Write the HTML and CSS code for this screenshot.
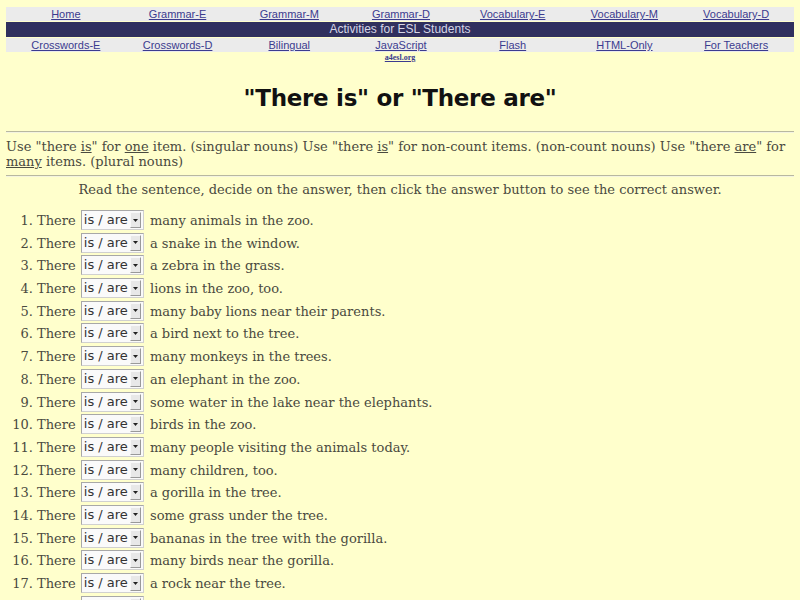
FILE: index.html
```html
<!DOCTYPE html>
<html lang="en">
<head>
  <meta charset="UTF-8">
  <title>There is or There are</title>
  <link rel="stylesheet" href="styles.css">
</head>
<body>

<div class="page">

  <!-- site navigation -->
  <div class="nav">
    <div class="nav-row">
      <a href="#">Home</a>
      <a href="#">Grammar-E</a>
      <a href="#">Grammar-M</a>
      <a href="#">Grammar-D</a>
      <a href="#">Vocabulary-E</a>
      <a href="#">Vocabulary-M</a>
      <a href="#">Vocabulary-D</a>
    </div>
    <div class="nav-banner">Activities for ESL Students</div>
    <div class="nav-row">
      <a href="#">Crosswords-E</a>
      <a href="#">Crosswords-D</a>
      <a href="#">Bilingual</a>
      <a href="#">JavaScript</a>
      <a href="#">Flash</a>
      <a href="#">HTML-Only</a>
      <a href="#">For Teachers</a>
    </div>
    <div class="site"><a href="#">a4esl.org</a></div>
  </div>

  <h1>"There is" or "There are"</h1>

  <hr>
  <p class="rule">Use "there <u>is</u>" for <u>one</u> item. (singular nouns) Use "there <u>is</u>" for non-count items. (non-count nouns) Use "there <u>are</u>" for <u>many</u> items. (plural nouns)</p>
  <hr>

  <p class="howto">Read the sentence, decide on the answer, then click the answer button to see the correct answer.</p>

  <ol class="quiz" id="quiz"></ol>

</div>

<script>
  const sentences = [
    "many animals in the zoo.",
    "a snake in the window.",
    "a zebra in the grass.",
    "lions in the zoo, too.",
    "many baby lions near their parents.",
    "a bird next to the tree.",
    "many monkeys in the trees.",
    "an elephant in the zoo.",
    "some water in the lake near the elephants.",
    "birds in the zoo.",
    "many people visiting the animals today.",
    "many children, too.",
    "a gorilla in the tree.",
    "some grass under the tree.",
    "bananas in the tree with the gorilla.",
    "many birds near the gorilla.",
    "a rock near the tree.",
    "a big tree near the rock."
  ];

  const quiz = document.getElementById("quiz");

  sentences.forEach(text => {
    const li = document.createElement("li");
    li.innerHTML =
      'There <span class="pick"><span class="pick-text">is / are</span>' +
      '<span class="pick-arrow"><svg width="5" height="3" viewBox="0 0 5 3"><path d="M0 0h5L2.5 3z" fill="#222"/></svg></span></span> ' +
      text;
    quiz.appendChild(li);
  });
</script>

</body>
</html>
```

FILE: styles.css
```css
body {
  margin: 0;
  background: #ffffcc;
  color: #4a4a40;
  font-family: "DejaVu Serif", serif;
  font-size: 13px;
}

.page {
  padding: 7px 6px 0;
}

/* navigation table */
.nav-row {
  display: grid;
  grid-template-columns: repeat(7, 1fr);
  padding: 0 2px 0 4px;
  background: #ebebeb;
  height: 14px;
  line-height: 14px;
  text-align: center;
  font-family: "Liberation Sans", Arial, sans-serif;
  font-size: 11px;
}

.nav-row a {
  color: #3b3b8f;
}

.nav-banner {
  margin: 1px 0;
  background: #30305e;
  color: #d6d6e6;
  height: 15px;
  line-height: 15px;
  text-align: center;
  font-family: "Liberation Sans", Arial, sans-serif;
  font-size: 12px;
}

.site {
  text-align: center;
  font-family: "Liberation Serif", serif;
  font-size: 8px;
  font-weight: bold;
  line-height: 10px;
  margin-top: 1px;
}

.site a {
  color: #3b3b8f;
}

h1 {
  margin: 19px 0 0;
  text-align: center;
  color: #111;
  font-family: "DejaVu Sans", sans-serif;
  font-size: 23px;
  font-weight: bold;
  line-height: 32px;
  letter-spacing: -0.3px;
}

hr {
  margin: 0;
  border: 0;
  border-top: 1px solid #b8b8a0;
  border-bottom: 1px solid #f4f4e0;
}

hr:first-of-type {
  margin-top: 17px;
}

.rule {
  margin: 6px 0 6px;
  line-height: 15px;
}

.howto {
  margin: 5px 0 0;
  text-align: center;
  line-height: 15px;
}

.quiz {
  margin: 13px 0 0;
  padding-left: 31px;
}

.quiz li {
  height: 22.7px;
  line-height: 22.7px;
}

.pick {
  display: inline-flex;
  align-items: center;
  vertical-align: middle;
  height: 18px;
  margin: -3px 2px 0 1px;
  background: #fafafa;
  border: 1px solid #a8a8a8;
  border-right-color: #d0d0d0;
  border-bottom-color: #d0d0d0;
  font-family: "DejaVu Sans", sans-serif;
  font-size: 13px;
  color: #333;
  line-height: 18px;
}

.pick-text {
  padding: 0 2px 0 2px;
}

.pick-arrow {
  display: inline-flex;
  align-items: center;
  justify-content: center;
  width: 9px;
  height: 14px;
  margin-right: 2px;
  background: #e8e8e8;
  border: 1px solid #f8f8f8;
  border-right-color: #999;
  border-bottom-color: #999;
}
```
